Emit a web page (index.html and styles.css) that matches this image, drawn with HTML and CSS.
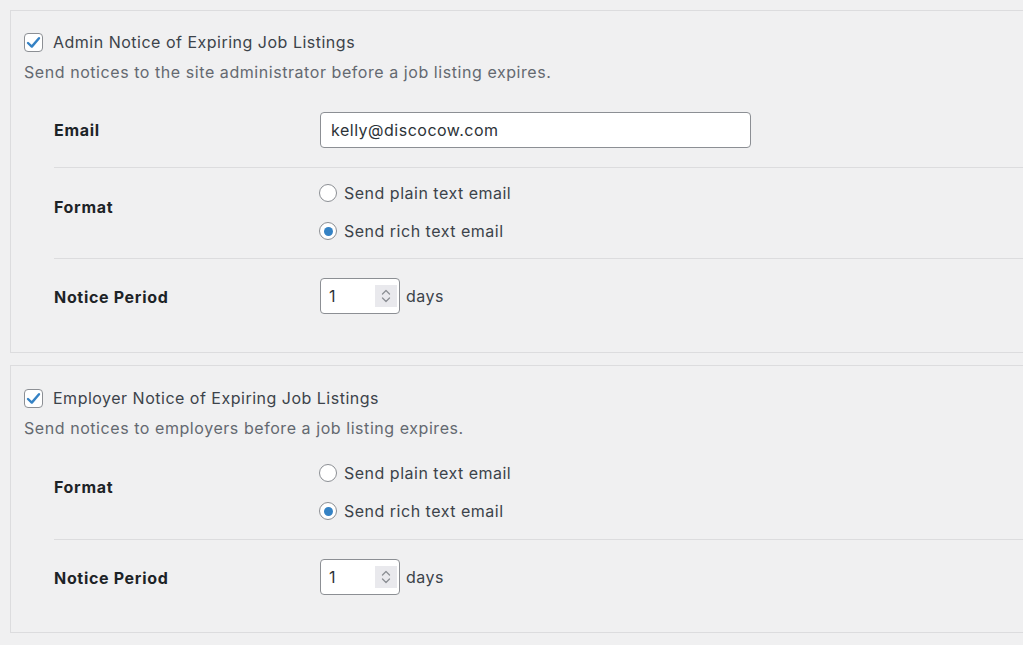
FILE: index.html
```html
<!DOCTYPE html>
<html lang="en">
<head>
<meta charset="utf-8">
<title>Job Listing Notifications</title>
<link rel="stylesheet" href="styles.css">
</head>
<body>
<div class="page">
  <section class="notice-box">
    <label class="toggle">
      <span class="check-box">
        <svg width="15" height="13" viewBox="0 0 15 13"><path d="M2 7 L5.8 10.6 L13 2.2" fill="none" stroke="#3582c4" stroke-width="2.4" stroke-linecap="round" stroke-linejoin="round"/></svg>
      </span>
      <span class="toggle-text">Admin Notice of Expiring Job Listings</span>
    </label>
    <p class="desc">Send notices to the site administrator before a job listing expires.</p>
    <div class="rows">
      <div class="row row-email">
        <div class="row-label">Email</div>
        <div class="row-field"><input class="text-input" type="email" value="kelly@discocow.com"></div>
      </div>
      <div class="row row-format">
        <div class="row-label label-format">Format</div>
        <div class="row-field radios">
          <label class="radio"><span class="radio-dot"></span><span>Send plain text email</span></label>
          <label class="radio"><span class="radio-dot is-checked"></span><span>Send rich text email</span></label>
        </div>
      </div>
      <div class="row row-period">
        <div class="row-label period-label">Notice Period</div>
        <div class="row-field inline">
          <span class="num-input"><input class="num-field" type="text" value="1">
            <span class="spinner"><svg width="22" height="22" viewBox="0 0 22 22"><path d="M7.5 9 L11 5.5 L14.5 9" fill="none" stroke="#8c8f94" stroke-width="1.3" stroke-linecap="round" stroke-linejoin="round"/><path d="M7.5 13 L11 16.5 L14.5 13" fill="none" stroke="#8c8f94" stroke-width="1.3" stroke-linecap="round" stroke-linejoin="round"/></svg></span>
          </span>
          <span class="unit">days</span>
        </div>
      </div>
    </div>
  </section>

  <section class="notice-box second">
    <label class="toggle">
      <span class="check-box">
        <svg width="15" height="13" viewBox="0 0 15 13"><path d="M2 7 L5.8 10.6 L13 2.2" fill="none" stroke="#3582c4" stroke-width="2.4" stroke-linecap="round" stroke-linejoin="round"/></svg>
      </span>
      <span class="toggle-text">Employer Notice of Expiring Job Listings</span>
    </label>
    <p class="desc">Send notices to employers before a job listing expires.</p>
    <div class="rows">
      <div class="row row-format first-format">
        <div class="row-label label-format">Format</div>
        <div class="row-field radios">
          <label class="radio"><span class="radio-dot"></span><span>Send plain text email</span></label>
          <label class="radio"><span class="radio-dot is-checked"></span><span>Send rich text email</span></label>
        </div>
      </div>
      <div class="row row-period">
        <div class="row-label period-label">Notice Period</div>
        <div class="row-field inline">
          <span class="num-input"><input class="num-field" type="text" value="1">
            <span class="spinner"><svg width="22" height="22" viewBox="0 0 22 22"><path d="M7.5 9 L11 5.5 L14.5 9" fill="none" stroke="#8c8f94" stroke-width="1.3" stroke-linecap="round" stroke-linejoin="round"/><path d="M7.5 13 L11 16.5 L14.5 13" fill="none" stroke="#8c8f94" stroke-width="1.3" stroke-linecap="round" stroke-linejoin="round"/></svg></span>
          </span>
          <span class="unit">days</span>
        </div>
      </div>
    </div>
  </section>
</div>
</body>
</html>
```

FILE: styles.css
```css
html, body {
  margin: 0;
  padding: 0;
  background: #f0f0f1;
}
body {
  font-family: Inter, "Noto Sans", "Liberation Sans", sans-serif;
  font-size: 16px;
  line-height: 24px;
  letter-spacing: 0.5px;
  color: #3c434a;
  overflow: hidden;
}
.page {
  padding: 10px 0 0 10px;
}
.notice-box {
  border: 1px solid #dcdcde;
  border-right: none;
  padding: 19px 0 18px 13px;
  margin: 0 0 12px 0;
}
.notice-box.second {
  padding-top: 20px;
  padding-bottom: 17px;
}
.toggle {
  display: flex;
  align-items: center;
  gap: 10px;
  height: 24px;
}
.check-box {
  width: 17px;
  height: 17px;
  border: 1px solid #8c8f94;
  border-radius: 4px;
  background: #fff;
  display: flex;
  align-items: center;
  justify-content: center;
  flex: none;
}
.toggle-text {
  color: #3c434a;
}
.desc {
  margin: 6px 0 0 0;
  color: #646970;
  letter-spacing: 0.56px;
}
.rows {
  margin: 8px 0 0 30px;
}
.row {
  display: grid;
  grid-template-columns: 266px 1fr;
  align-items: center;
  border-bottom: 1px solid #dcdcde;
}
.row:last-child {
  border-bottom: none;
}
.row-email {
  padding: 20px 0 19px;
}
.row-format {
  padding: 13px 0 15px;
}
.first-format {
  padding: 13px 0 16px;
}
.row-period {
  padding: 19px 0 20px;
}
.row-label {
  font-weight: 700;
  letter-spacing: 0.68px;
  color: #1d2327;
}
.period-label {
  margin-top: 2px;
}
.label-format {
  margin-bottom: 10px;
}
.text-input {
  box-sizing: border-box;
  width: 431px;
  height: 36px;
  border: 1px solid #8c8f94;
  border-radius: 4px;
  background: #fff;
  padding: 0 10px;
  font: inherit;
  letter-spacing: 0.5px;
  color: #2c3338;
  outline: none;
  display: block;
}
.radios {
  display: flex;
  flex-direction: column;
  gap: 14px;
  margin-left: -1px;
}
.radio {
  display: flex;
  align-items: center;
  gap: 7px;
  height: 24px;
  color: #3c434a;
}
.radio-dot {
  box-sizing: border-box;
  width: 18px;
  height: 18px;
  border: 1px solid #8c8f94;
  border-radius: 50%;
  background: #fff;
  display: flex;
  align-items: center;
  justify-content: center;
  flex: none;
}
.radio-dot.is-checked::after {
  content: "";
  width: 9px;
  height: 9px;
  border-radius: 50%;
  background: #3582c4;
}
.inline {
  display: flex;
  align-items: center;
  gap: 6px;
}
.num-input {
  position: relative;
  display: block;
  width: 80px;
  height: 36px;
}
.num-field {
  box-sizing: border-box;
  width: 80px;
  height: 36px;
  border: 1px solid #8c8f94;
  border-radius: 4px;
  background: #fff;
  padding: 0 8px;
  font: inherit;
  letter-spacing: 0.5px;
  color: #2c3338;
  outline: none;
  display: block;
}
.spinner {
  position: absolute;
  top: 7px;
  right: 3px;
  width: 22px;
  height: 22px;
  background: #e9e9ed;
  display: block;
}
.spinner svg {
  display: block;
}
.unit {
  color: #3c434a;
}
```
